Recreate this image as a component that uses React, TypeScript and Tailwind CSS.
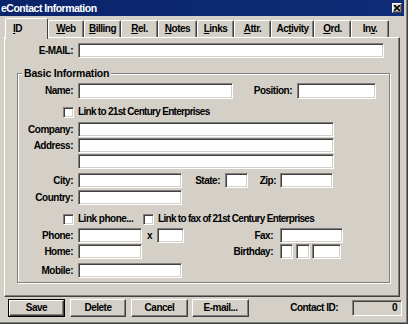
import React from "react";

const sunken =
  "bg-white border border-t-[#808080] border-l-[#808080] border-b-white border-r-white shadow-[inset_1px_1px_0_#404040,inset_-1px_-1px_0_#d4d0c8]";
const raised =
  "bg-[#d4d0c8] border border-t-white border-l-white border-b-[#404040] border-r-[#404040] shadow-[inset_-1px_-1px_0_#808080]";

function Check() {
  return <div className={`w-[11px] h-[11px] shrink-0 ${sunken}`} />;
}

const tabs: { label: React.ReactNode; w: string }[] = [
  { label: <><u>W</u>eb</>, w: "w-[36px]" },
  { label: <><u>B</u>illing</>, w: "w-[37px]" },
  { label: <><u>R</u>el.</>, w: "w-[37px]" },
  { label: <><u>N</u>otes</>, w: "w-[39px]" },
  { label: <><u>L</u>inks</>, w: "w-[37px]" },
  { label: <><u>A</u>ttr.</>, w: "w-[37px]" },
  { label: <>Ac<u>t</u>ivity</>, w: "w-[43px]" },
  { label: <><u>O</u>rd.</>, w: "w-[37px]" },
  { label: <>In<u>v</u>.</>, w: "w-[38px]" },
];

export default function App() {
  return (
    <div className="w-[408px] h-[324px] overflow-hidden whitespace-nowrap bg-[#d4d0c8] text-black text-[10px] tracking-[-0.5px] leading-none font-bold font-['Liberation_Sans',Arial,sans-serif] shadow-[inset_-1px_-1px_0_#404040,inset_-2px_-2px_0_#808080] flex flex-col">
      {/* title bar */}
      <div className="w-[404px] h-[16px] shrink-0 bg-gradient-to-r from-[#0a246a] to-[#0e2c78] flex items-center justify-between pl-[1px] pr-[2px]">
        <span className="text-white text-[10.5px]">eContact Information</span>
        <div className={`w-[10px] h-[10px] flex items-center justify-center ${raised}`}>
          <svg width="6" height="6" viewBox="0 0 6 6">
            <path d="M0 0L6 6M6 0L0 6" stroke="#000" strokeWidth="1.6" />
          </svg>
        </div>
      </div>

      {/* tabs */}
      <div className="flex items-end h-[19px] mt-[2px] pl-[5px] shrink-0">
        <div className="relative z-10 w-[43px] h-[21px] mb-[-2px] bg-[#d4d0c8] border-t border-l border-white border-r border-r-[#404040] rounded-t-[2px] flex items-center pl-[7px] pb-[1px]">
          <span><u>I</u>D</span>
        </div>
        {tabs.map((t, i) => (
          <div
            key={i}
            className={`${t.w} h-[17px] border-t border-l border-white border-r border-r-[#404040] shadow-[inset_-1px_0_0_#808080] rounded-t-[2px] flex items-center justify-center`}
          >
            <span>{t.label}</span>
          </div>
        ))}
      </div>

      {/* panel */}
      <div className="ml-[4px] w-[396px] h-[260px] shrink-0 border-t border-l border-white border-r border-b border-r-[#404040] border-b-[#404040] shadow-[inset_-1px_-1px_0_#808080] flex flex-col">
        <div className="flex items-center h-[15px] mt-[5px]">
          <div className="w-[73px] text-right pr-[5px]">E-MAIL:</div>
          <div className={`w-[306px] h-full ${sunken}`} />
        </div>

        <div className="relative ml-[12px] mt-[15px] w-[373px] h-[210px] border border-[#808080] shadow-[inset_1px_1px_0_#fff,1px_1px_0_#fff] flex flex-col">
          <div className="absolute left-[4px] top-[-6px] px-[2px] bg-[#d4d0c8] text-[10.5px] tracking-[-0.2px]">Basic Information</div>

          <div className="flex items-center h-[16px] mt-[9px]">
            <div className="w-[60px] text-right pr-[5px]">Name:</div>
            <div className={`w-[155px] h-full ${sunken}`} />
            <div className="w-[64px] text-right pr-[5px]">Position:</div>
            <div className={`w-[79px] h-full ${sunken}`} />
          </div>

          <div className="flex items-center h-[14px] mt-[6px] pl-[45px] gap-[4px]">
            <Check />
            <span className="tracking-[-0.7px]">Link to 21st Century Enterprises</span>
          </div>

          <div className="flex items-center h-[15px] mt-[3px]">
            <div className="w-[60px] text-right pr-[5px]">Company:</div>
            <div className={`w-[256px] h-full ${sunken}`} />
          </div>
          <div className="flex items-center h-[15px] mt-[1px]">
            <div className="w-[60px] text-right pr-[5px]">Address:</div>
            <div className={`w-[256px] h-full ${sunken}`} />
          </div>
          <div className="flex items-center h-[15px] mt-[1px]">
            <div className="w-[60px]" />
            <div className={`w-[256px] h-full ${sunken}`} />
          </div>

          <div className="flex items-center h-[15px] mt-[4px]">
            <div className="w-[60px] text-right pr-[5px]">City:</div>
            <div className={`w-[104px] h-full ${sunken}`} />
            <div className="w-[43px] text-right pr-[5px]">State:</div>
            <div className={`w-[23px] h-full ${sunken}`} />
            <div className="w-[32px] text-right pr-[4px]">Zip:</div>
            <div className={`w-[53px] h-full ${sunken}`} />
          </div>
          <div className="flex items-center h-[15px] mt-[2px]">
            <div className="w-[60px] text-right pr-[5px]">Country:</div>
            <div className={`w-[104px] h-full ${sunken}`} />
          </div>

          <div className="flex items-center h-[14px] mt-[7px] pl-[45px]">
            <div className="w-[80px] flex items-center gap-[4px]">
              <Check />
              <span>Link phone...</span>
            </div>
            <div className="flex items-center gap-[4px]">
              <Check />
              <span className="tracking-[-0.7px]">Link to fax of 21st Century Enterprises</span>
            </div>
          </div>

          <div className="flex items-center h-[15px] mt-[2px]">
            <div className="w-[60px] text-right pr-[5px]">Phone:</div>
            <div className={`w-[64px] h-full ${sunken}`} />
            <div className="w-[15px] text-center">x</div>
            <div className={`w-[27px] h-full ${sunken}`} />
            <div className="w-[96px] text-right pr-[7px]">Fax:</div>
            <div className={`w-[63px] h-full ${sunken}`} />
          </div>
          <div className="flex items-center h-[15px] mt-[1px]">
            <div className="w-[60px] text-right pr-[5px]">Home:</div>
            <div className={`w-[64px] h-full ${sunken}`} />
            <div className="w-[138px] text-right pr-[7px]">Birthday:</div>
            <div className={`w-[13px] h-full ${sunken}`} />
            <div className={`w-[14px] h-full ml-[3px] ${sunken}`} />
            <div className={`w-[29px] h-full ml-[2px] ${sunken}`} />
          </div>
          <div className="flex items-center h-[15px] mt-[4px]">
            <div className="w-[60px] text-right pr-[5px]">Mobile:</div>
            <div className={`w-[104px] h-full ${sunken}`} />
          </div>
        </div>
      </div>

      {/* buttons */}
      <div className="flex items-center h-[18px] mt-[2px] pl-[8px]">
        <div className="w-[57px] h-full border border-black">
          <div className={`w-full h-full flex items-center justify-center ${raised}`}>Save</div>
        </div>
        <div className={`w-[56px] h-full ml-[5px] flex items-center justify-center ${raised}`}>Delete</div>
        <div className={`w-[57px] h-full ml-[5px] flex items-center justify-center ${raised}`}>Cancel</div>
        <div className={`w-[57px] h-full ml-[4px] flex items-center justify-center ${raised}`}>E-mail...</div>
        <div className="w-[103px] text-right pr-[14px]">Contact ID:</div>
        <div className={`w-[50px] h-[16px] flex items-center justify-end pr-[4px] !bg-[#d4d0c8] ${sunken}`}>0</div>
      </div>
    </div>
  );
}
